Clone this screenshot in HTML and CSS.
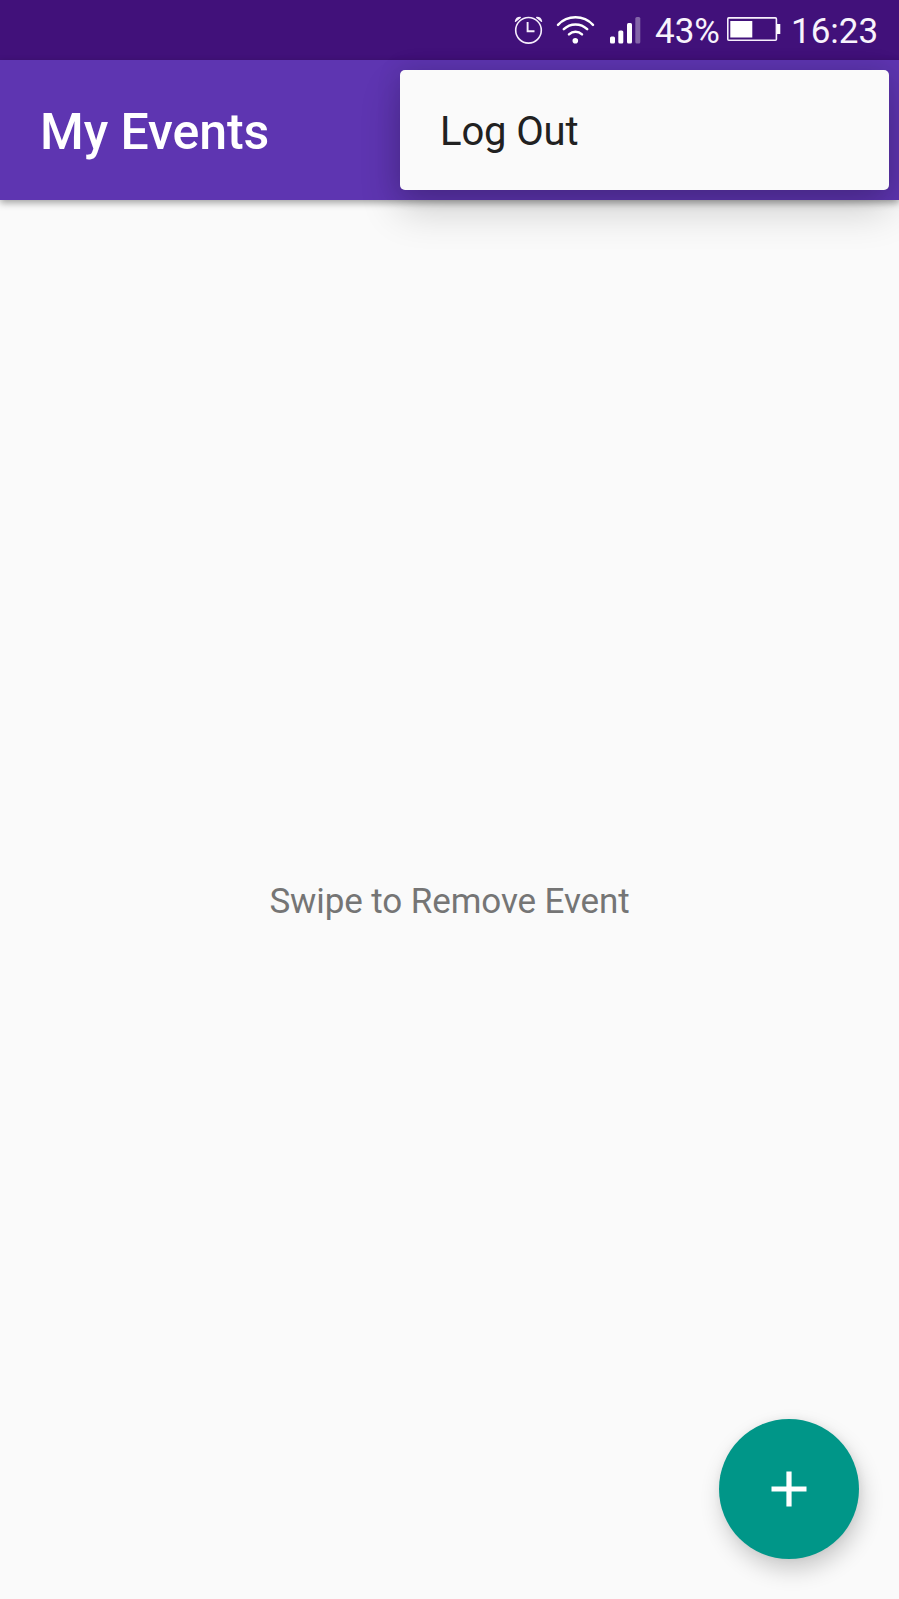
FILE: index.html
```
<!DOCTYPE html>
<html lang="en">
<head>
<meta charset="utf-8">
<title>My Events</title>
<link rel="stylesheet" href="styles.css">
</head>
<body>
<div class="screen">
  <div class="status-bar">
    <svg class="status-icons" width="140" height="60" viewBox="0 0 140 60" fill="none" stroke="#fff" stroke-linecap="round">
      <g stroke-width="1.6" stroke="#f6effc">
        <circle cx="18.5" cy="30.3" r="12.8"/>
        <path d="M17.6 22V31.3H24.5" stroke-linecap="butt" stroke-width="1.9"/>
        <path d="M5.5 21.3C6 19 7.8 17.4 10.3 17.5ZM31.5 21.3C31 19 29.2 17.4 26.7 17.5Z" fill="#f6effc" stroke-width="1.4" stroke-linejoin="round"/>
      </g>
      <g stroke-width="2.5">
        <path d="M48 24.8C57.5 14.8 73.5 14.8 83 24.8"/>
        <path d="M53.8 29.2C60.3 22.8 70.7 22.8 77.2 29.2"/>
        <path d="M59 34.3C62.8 30.8 68.2 30.8 72 34.3"/>
      </g>
      <g fill="#fff" stroke="none">
        <circle cx="65.3" cy="40.7" r="2.8"/>
        <rect x="100" y="36.5" width="5" height="7" rx="1.5"/>
        <rect x="108.3" y="30.5" width="5" height="13" rx="1.5"/>
        <rect x="117" y="23" width="5" height="20.5" rx="1.5"/>
        <rect x="125.3" y="17" width="5" height="26.5" rx="1.5" fill-opacity=".35"/>
      </g>
    </svg>
    <span class="battery-level">43%</span>
    <svg class="battery" width="54" height="60" viewBox="0 0 54 60">
      <rect x=".8" y="17.9" width="48.6" height="22.4" rx="1" fill="none" stroke="#f6effc" stroke-width="1.6"/>
      <path d="M3.3 21H25.3V37.4H3.3ZM50 24H53.3V34H50Z" fill="#fff"/>
    </svg>
    <span class="clock">16:23</span>
  </div>
  <header class="app-bar">
    <h1 class="title">My Events</h1>
    <div class="menu"><span class="menu-item">Log Out</span></div>
  </header>
  <main class="content"><p class="hint">Swipe to Remove Event</p></main>
  <button class="fab" aria-label="Add event">
    <svg width="36" height="36" viewBox="0 0 36 36"><path d="M.5 18H35.5M18 .5V35.5" stroke="#fff" stroke-width="5.2"/></svg>
  </button>
</div>
</body>
</html>
```
FILE: styles.css
```
* { box-sizing: border-box; }
body { margin: 0; font-family: Roboto, "Liberation Sans", sans-serif; }
.screen {
  position: relative;
  display: flex;
  flex-direction: column;
  width: 899px;
  height: 1599px;
  overflow: hidden;
  background: #fafafa;
}
.status-bar {
  display: flex;
  justify-content: flex-end;
  height: 60px;
  padding-right: 20px;
  background: #41117a;
  color: #f8f3fc;
  font-size: 35px;
  line-height: 64px;
}
.status-icons { margin-right: 5px; }
.battery-level { width: 72px; }
.battery { margin-right: 10px; }
.clock { width: 88px; white-space: nowrap; }
.status-bar .battery { margin-left: 0; }
.app-bar {
  position: relative;
  display: flex;
  height: 140px;
  padding: 2px 0 0 40px;
  background: #5e35b1;
  box-shadow: 0 3px 7px rgba(0, 0, 0, .35);
}
.title {
  margin: 0;
  color: #fff;
  font-size: 50px;
  font-weight: 500;
  line-height: 140px;
  letter-spacing: -.05px;
}
.menu {
  position: absolute;
  top: 10px;
  right: 10px;
  width: 489px;
  height: 120px;
  padding-left: 40px;
  border-radius: 5px;
  background: #fafafa;
  box-shadow: 0 20px 40px rgba(0, 0, 0, .19), 0 0 24px rgba(0, 0, 0, .13);
}
.menu-item {
  color: #212121;
  font-size: 40px;
  line-height: 124px;
  letter-spacing: -.15px;
}
.content {
  flex: 1;
  display: flex;
  align-items: center;
  justify-content: center;
  padding-top: 5px;
}
.hint {
  margin: 0;
  color: #757575;
  font-size: 35px;
  line-height: 42px;
  letter-spacing: -.1px;
}
.fab {
  position: absolute;
  right: 40px;
  bottom: 40px;
  display: flex;
  align-items: center;
  justify-content: center;
  width: 140px;
  height: 140px;
  padding: 0;
  border: 0;
  border-radius: 50%;
  background: #009688;
  box-shadow: 3px 11px 22px rgba(0, 0, 0, .19), 1px 0 8px rgba(0, 0, 0, .06);
}
```
